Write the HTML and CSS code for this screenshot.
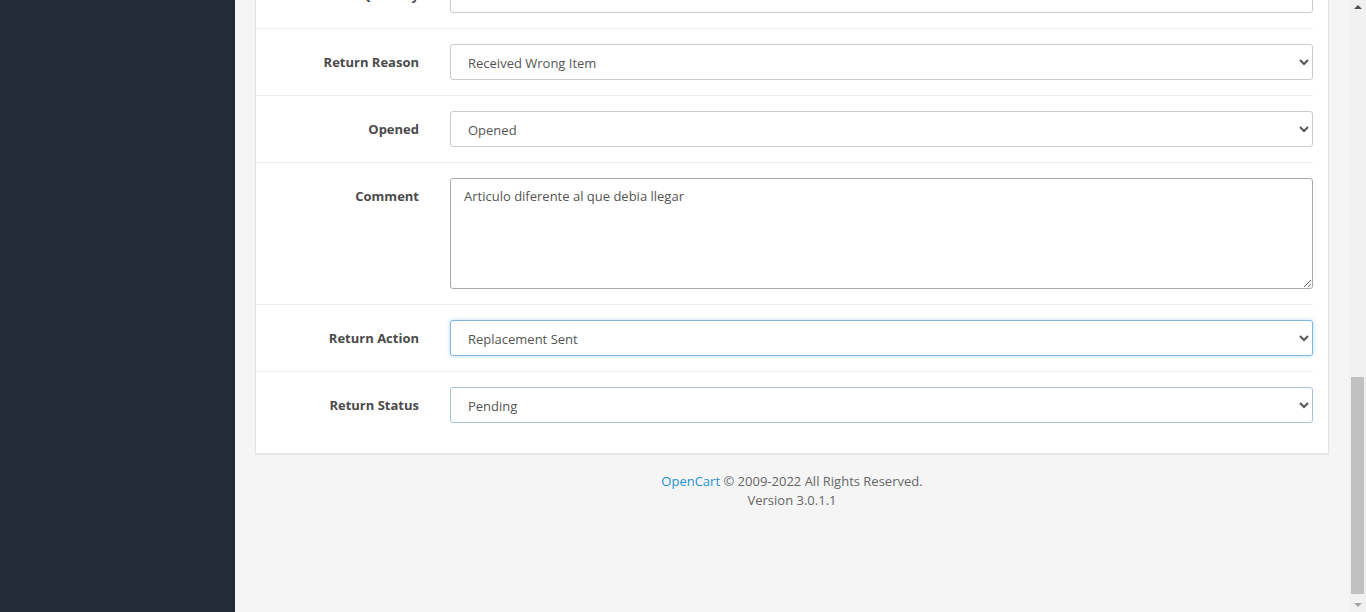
FILE: index.html
```html
<!DOCTYPE html>
<html lang="en">
<head>
<meta charset="utf-8">
<title>Returns</title>
<link rel="stylesheet" href="styles.css">
</head>
<body>
<div class="layout">
  <aside class="sidebar"></aside>
  <main class="main">
    <div class="panel">
      <form class="form">
        <div class="form-group">
          <label class="control-label">Quantity</label>
          <div class="field"><input class="form-control" type="text" value=""></div>
        </div>
        <div class="form-group">
          <label class="control-label">Return Reason</label>
          <div class="field">
            <select class="form-control">
              <option>Received Wrong Item</option>
            </select>
          </div>
        </div>
        <div class="form-group">
          <label class="control-label">Opened</label>
          <div class="field">
            <select class="form-control">
              <option>Opened</option>
            </select>
          </div>
        </div>
        <div class="form-group">
          <label class="control-label">Comment</label>
          <div class="field">
            <textarea class="form-control textarea">Articulo diferente al que debia llegar</textarea>
          </div>
        </div>
        <div class="form-group">
          <label class="control-label">Return Action</label>
          <div class="field">
            <select class="form-control focused">
              <option>Replacement Sent</option>
            </select>
          </div>
        </div>
        <div class="form-group">
          <label class="control-label">Return Status</label>
          <div class="field">
            <select class="form-control hovered">
              <option>Pending</option>
            </select>
          </div>
        </div>
      </form>
    </div>
    <footer class="footer">
      <a href="#" class="link">OpenCart</a> &copy; 2009-2022 All Rights Reserved.<br>Version 3.0.1.1
    </footer>
  </main>
  <div class="scrollbar">
    <div class="sb-arrow up"></div>
    <div class="sb-track"><div class="sb-thumb"></div></div>
    <div class="sb-arrow down"></div>
  </div>
</div>
</body>
</html>
```
FILE: styles.css
```css
html, body {
  margin: 0;
  padding: 0;
  height: 100%;
  overflow: hidden;
}
body {
  font-family: "Open Sans", "Liberation Sans", sans-serif;
  font-size: 12px;
  color: #666;
}
.layout {
  display: flex;
  height: 612px;
  overflow: hidden;
}
.sidebar {
  width: 235px;
  flex: none;
  background: #242b38;
}
.main {
  flex: 1;
  background: #f5f5f5;
  padding: 0 20px;
  overflow: hidden;
  display: flex;
  flex-direction: column;
}
.panel {
  background: #fff;
  border: 1px solid #e3e3e3;
  border-top: none;
  margin-top: -39px;
  padding: 0 15px 15px 0;
  box-shadow: 0 1px 1px rgba(0,0,0,0.05);
}
.form-group {
  display: flex;
  align-items: flex-start;
  padding: 15px 0;
  border-top: 1px solid #ededed;
}
.control-label {
  width: 163px;
  flex: none;
  padding: 9px 15px 0 0;
  text-align: right;
  font-weight: bold;
  font-size: 13px;
  line-height: 18px;
  color: #4b4b4b;
}
.field {
  flex: 1;
  padding-left: 16px;
}
.form-control {
  display: block;
  width: 100%;
  box-sizing: border-box;
  height: 36px;
  padding: 8px 13px;
  font-family: "Open Sans", "Liberation Sans", sans-serif;
  font-size: 13px;
  color: #555;
  background: #fff;
  border: 1px solid #cccccc;
  border-radius: 3px;
  outline: none;
}
select.form-control {
  padding: 7px 9px 5px 13px;
}
.form-control.textarea {
  height: 111px;
  resize: vertical;
  line-height: 18px;
  border-color: #a9a9a9;
  padding: 8px 13px;
}
.form-control.focused {
  border-color: #7fb5e2;
  box-shadow: 0 0 4px rgba(102, 175, 233, 0.45);
}
.form-control.hovered {
  border-color: #a7c1d8;
}
.footer {
  text-align: center;
  padding-top: 18px;
  line-height: 19px;
  font-size: 13px;
  color: #666;
}
.link {
  color: #1e91cf;
  text-decoration: none;
}
.scrollbar {
  width: 17px;
  flex: none;
  background: #f1f1f1;
  display: flex;
  flex-direction: column;
}
.sb-arrow {
  height: 17px;
  flex: none;
  position: relative;
}
.sb-arrow::after {
  content: "";
  position: absolute;
  left: 5px;
  width: 0;
  height: 0;
  border-left: 4px solid transparent;
  border-right: 4px solid transparent;
}
.sb-arrow.up::after {
  top: 5px;
  border-bottom: 4px solid #505050;
}
.sb-arrow.down::after {
  bottom: 5px;
  border-top: 4px solid #a3a3a3;
}
.sb-track {
  flex: 1;
  display: flex;
  flex-direction: column;
  justify-content: flex-end;
  padding: 0 2px;
}
.sb-thumb {
  height: 217px;
  background: #c1c1c1;
  margin-bottom: 1px;
}
```
